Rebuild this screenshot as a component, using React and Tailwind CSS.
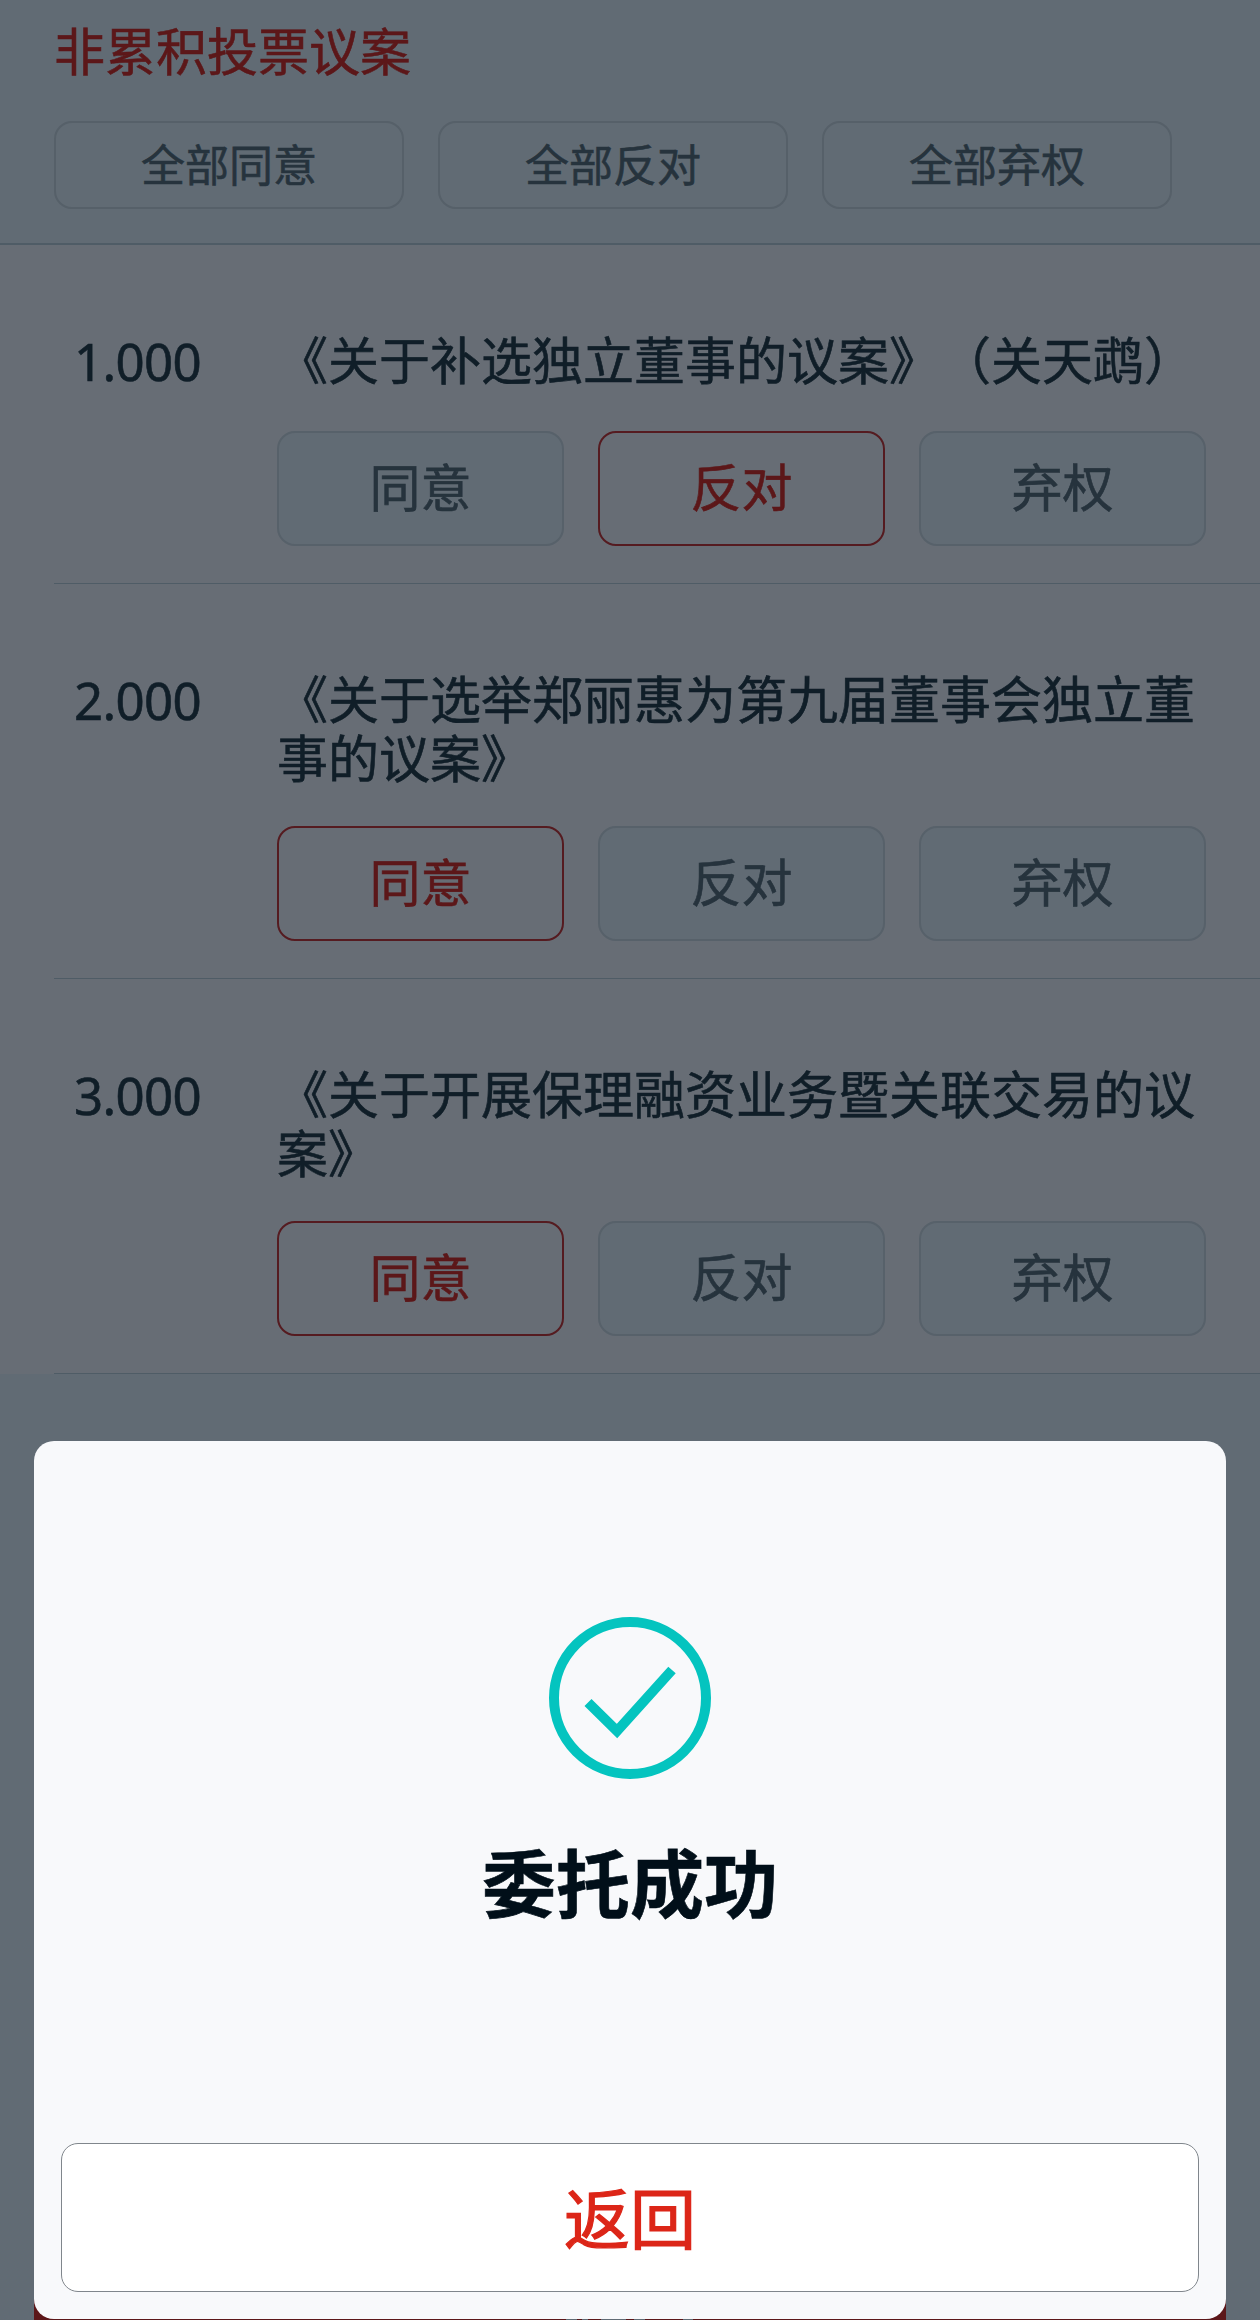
import React, { useState } from "react";

const bulkActions = ["全部同意", "全部反对", "全部弃权"];
const options = ["同意", "反对", "弃权"];

const proposals = [
  { id: "1.000", title: "《关于补选独立董事的议案》（关天鹉）", vote: "反对" },
  { id: "2.000", title: "《关于选举郑丽惠为第九届董事会独立董事的议案》", vote: "同意" },
  { id: "3.000", title: "《关于开展保理融资业务暨关联交易的议案》", vote: "同意" },
];

function VoteButton({ label, active, onClick }) {
  return (
    <button
      onClick={onClick}
      className={
        "h-[115px] flex-1 rounded-[18px] border-2 pb-1.5 text-[51px] leading-none " +
        (active
          ? "border-[#551b20] text-[#5c1719]"
          : "border-[#57616a] bg-[#616b74] text-[#26333d]")
      }
    >
      {label}
    </button>
  );
}

function Proposal({ item, onVote }) {
  return (
    <div className="bg-[#676d75]">
      <div className="flex pt-[84px] pb-[37px] pr-[54px]">
        <div className="w-[277px] shrink-0 pt-[3px] pl-[74px] font-['Noto_Sans',sans-serif] text-[51px] leading-[59px] tracking-[-0.7px] text-[#101e28]">
          {item.id}
        </div>
        <div className="flex-1">
          <h2 className="min-h-[62px] text-[51px] leading-[59px] text-[#101e28] [text-spacing-trim:space-all]">
            {item.title}
          </h2>
          <div className="mt-[40px] flex gap-[34px]">
            {options.map((label) => (
              <VoteButton
                key={label}
                label={label}
                active={item.vote === label}
                onClick={() => onVote(item.id, label)}
              />
            ))}
          </div>
        </div>
      </div>
      <div className="ml-[54px] h-px bg-[#4f5c66]"></div>
    </div>
  );
}

function App() {
  const [items, setItems] = useState(proposals);
  const [open, setOpen] = useState(true);

  const handleVote = (id, vote) => {
    setItems(items.map((item) => (item.id === id ? { ...item, vote } : item)));
  };

  const handleAll = (label) => {
    setItems(items.map((item) => ({ ...item, vote: label.slice(2) })));
  };

  return (
    <div
      lang="zh-CN"
      className="relative flex h-[2320px] w-[1260px] flex-col overflow-hidden bg-[#616b74] font-['Noto_Sans_CJK_SC',sans-serif] [-webkit-text-stroke-width:0.6px]"
    >
      <header className="h-[245px] border-b-2 border-[#4f5c66] px-[54px] pt-[19px]">
        <h1 className="text-[51px] leading-[60px] text-[#5c1719]">非累积投票议案</h1>
        <div className="mt-[42px] flex gap-[34px]">
          {bulkActions.map((label) => (
            <button
              key={label}
              onClick={() => handleAll(label)}
              className="h-[88px] w-[350px] rounded-[18px] border-2 border-[#566069] pb-1 text-[44px] leading-none text-[#26333d]"
            >
              {label}
            </button>
          ))}
        </div>
      </header>

      <main>
        {items.map((item) => (
          <Proposal key={item.id} item={item} onVote={handleVote} />
        ))}
      </main>

      {/* submit bar, mostly under the dialog */}
      <div className="mx-[34px] mt-auto flex h-[100px] shrink-0 items-end bg-[#5c1719] pl-[532px]">
        <i className="h-px w-[11px] bg-[#616b74]"></i>
        <i className="ml-[5px] h-px w-[6px] bg-[#616b74]"></i>
        <i className="ml-[13px] h-px w-[25px] bg-[#616b74]"></i>
        <i className="ml-[8px] h-px w-[11px] bg-[#616b74]"></i>
        <i className="ml-[38px] h-px w-[10px] bg-[#616b74]"></i>
      </div>

      {open && (
        <div className="absolute top-[1441px] left-[34px] flex h-[878px] w-[1192px] flex-col items-center rounded-[20px] bg-[#f8f9fb] px-[27px] pt-[176px] pb-[27px]">
          <svg width="162" height="162" viewBox="0 0 162 162" fill="none" stroke="#04c4bf" strokeWidth="10">
            <circle cx="81" cy="81" r="76" />
            <path d="M39 85.5 L68 114 L123 53" />
          </svg>
          <p className="mt-[56px] text-[74px] leading-[90px] font-bold text-[#010f19]">委托成功</p>
          <button
            onClick={() => setOpen(false)}
            className="mt-auto h-[149px] w-full rounded-[17px] border border-[#80868c] bg-white pb-[5px] text-[66px] leading-none text-[#dc2618] [-webkit-text-stroke-width:1.2px]"
          >
            返回
          </button>
        </div>
      )}
    </div>
  );
}

export default App;
